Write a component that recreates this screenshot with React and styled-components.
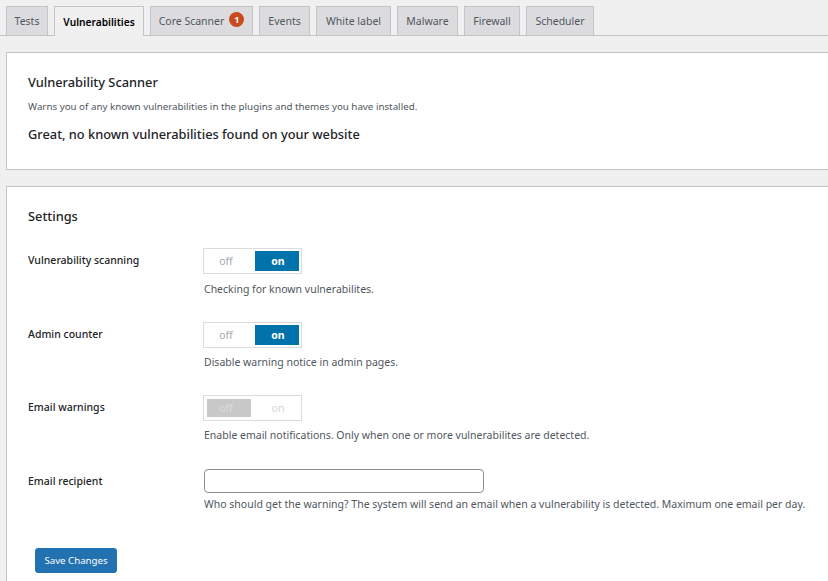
import styled, { createGlobalStyle } from 'styled-components'

const GlobalStyle = createGlobalStyle`
    html, body {
        margin: 0;
        padding: 0;
        background: #f0f0f1;
        overflow: hidden;
    }
    body {
        font-family: "Noto Sans", "Open Sans", sans-serif;
        color: #1d2327;
    }
`

const Page = styled.div`
    width: 828px;
    height: 581px;
    padding: 6px 0 0 6px;
    box-sizing: border-box;
    overflow: hidden;
`

const TabBar = styled.nav`
    display: flex;
    gap: 6px;
    height: 29px;
    margin-left: -6px;
    padding-left: 6px;
    border-bottom: 1px solid #c3c4c7;
`

const Tab = styled.a`
    display: flex;
    align-items: center;
    justify-content: center;
    gap: 5px;
    flex: none;
    width: ${ ( { $width } ) => $width }px;
    height: ${ ( { $active } ) => $active ? 30 : 29 }px;
    box-sizing: border-box;
    border: 1px solid #c3c4c7;
    border-bottom: 0;
    background: ${ ( { $active } ) => $active ? `#f0f0f1` : `#dcdcde` };
    color: ${ ( { $active } ) => $active ? `#000` : `#50575e` };
    font-size: ${ ( { $active } ) => $active ? 10.2 : 10.5 }px;
    font-weight: ${ ( { $active } ) => $active ? 600 : 400 };
    white-space: nowrap;
`

const Badge = styled.span`
    display: flex;
    align-items: center;
    justify-content: center;
    width: 15px;
    height: 15px;
    margin-top: -4px;
    border-radius: 50%;
    background: #ca4a1f;
    color: #fff;
    font-size: 9px;
    font-weight: 700;
`

const Panel = styled.section`
    width: 860px;
    box-sizing: border-box;
    margin-top: 16px;
    height: ${ ( { $height } ) => $height ? `${ $height }px` : `auto` };
    padding: 20px 21px ${ ( { $bottom } ) => $bottom }px;
    background: #fff;
    border: 1px solid #c3c4c7;
`

const PanelTitle = styled.h2`
    margin: 0;
    font-size: 12.8px;
    line-height: 18px;
    font-weight: 500;
    color: #1d2327;
`

const Intro = styled.p`
    margin: 9px 0 0;
    font-size: 9.78px;
    line-height: 14px;
    color: #50575e;
`

const Notice = styled.p`
    margin: 11px 0 0;
    font-size: 12.8px;
    line-height: 18px;
    font-weight: 500;
    color: #1d2327;
`

const Rows = styled.div`
    display: flex;
    flex-direction: column;
    margin-top: 23px;
`

const Row = styled.div`
    display: grid;
    grid-template-columns: 175px 1fr;
    height: ${ ( { $height } ) => $height }px;
`

const Label = styled.label`
    padding-top: 4px;
    font-size: 10.5px;
    line-height: 16px;
    font-weight: 500;
    color: #1d2327;
`

const Toggle = styled.div`
    display: flex;
    align-items: stretch;
    gap: 4px;
    width: 99px;
    height: 26px;
    box-sizing: border-box;
    padding: ${ ( { $disabled } ) => $disabled ? `3px 2px 3px 3px` : `2px 2px 2px 3px` };
    border: 1px solid #dcdcde;
    background: #fff;
`

const Segment = styled.span`
    display: flex;
    align-items: center;
    justify-content: center;
    width: 44px;
    box-sizing: border-box;
    padding: ${ ( { $side } ) => $side === `off` ? `0 6px 0 0` : `0 0 0 2px` };
    font-size: 10.5px;
    font-weight: ${ ( { $selected, $disabled } ) => $selected && !$disabled ? 700 : 400 };
    color: ${ ( { $selected, $disabled } ) => {
        if( $disabled ) return $selected ? `#dcdcde` : `#d5d5d5`
        return $selected ? `#fff` : `#a7aaad`
    } };
    background: ${ ( { $selected, $disabled } ) => {
        if( !$selected ) return `transparent`
        return $disabled ? `#c8c8c8` : `#0073aa`
    } };
`

const Hint = styled.p`
    margin: ${ ( { $top } ) => $top }px 0 0 1px;
    font-size: 10.5px;
    line-height: 15px;
    color: #50575e;
    white-space: nowrap;
`

const TextField = styled.input`
    display: block;
    width: 280px;
    height: 24px;
    margin-left: 1px;
    box-sizing: border-box;
    border: 1px solid #8c8f94;
    border-radius: 4px;
    background: #fff;
`

const SaveButton = styled.button`
    display: block;
    width: 82px;
    height: 25px;
    margin: 21px 0 0 7px;
    padding: 0;
    border: 1px solid #2271b1;
    border-radius: 3px;
    background: #2271b1;
    color: #fff;
    font-family: inherit;
    font-size: 9.7px;
`

const switch_rows = [
    { label: `Vulnerability scanning`, hint: `Checking for known vulnerabilites.`, on: true, height: 74, hint_top: 8 },
    { label: `Admin counter`, hint: `Disable warning notice in admin pages.`, on: true, height: 73, hint_top: 7 },
    { label: `Email warnings`, hint: `Enable email notifications. Only when one or more vulnerabilites are detected.`, on: false, disabled: true, height: 74, hint_top: 7 },
]

const tabs = [
    { name: `Tests`, width: 42 },
    { name: `Vulnerabilities`, width: 90 },
    { name: `Core Scanner`, width: 103 },
    { name: `Events`, width: 51 },
    { name: `White label`, width: 75 },
    { name: `Malware`, width: 61 },
    { name: `Firewall`, width: 56 },
    { name: `Scheduler`, width: 68 },
]

export default function App() {

    return <Page>

        <GlobalStyle />

        <TabBar>
            { tabs.map( tab => <Tab key={ tab.name } $width={ tab.width } $active={ tab.name === `Vulnerabilities` }>
                { tab.name }
                { tab.name === `Core Scanner` && <Badge>1</Badge> }
            </Tab> ) }
        </TabBar>

        <Panel $height={ 118 } $bottom={ 20 }>
            <PanelTitle>Vulnerability Scanner</PanelTitle>
            <Intro>Warns you of any known vulnerabilities in the plugins and themes you have installed.</Intro>
            <Notice>Great, no known vulnerabilities found on your website</Notice>
        </Panel>

        <Panel $bottom={ 40 }>

            <PanelTitle>Settings</PanelTitle>

            <Rows>

                { switch_rows.map( row => <Row key={ row.label } $height={ row.height }>
                    <Label>{ row.label }</Label>
                    <div>
                        <Toggle $disabled={ row.disabled }>
                            <Segment $side="off" $selected={ !row.on } $disabled={ row.disabled }>off</Segment>
                            <Segment $side="on" $selected={ row.on } $disabled={ row.disabled }>on</Segment>
                        </Toggle>
                        <Hint $top={ row.hint_top }>{ row.hint }</Hint>
                    </div>
                </Row> ) }

                <Row $height={ 58 }>
                    <Label>Email recipient</Label>
                    <div>
                        <TextField type="text" />
                        <Hint $top={ 4 }>Who should get the warning? The system will send an email when a vulnerability is detected. Maximum one email per day.</Hint>
                    </div>
                </Row>

            </Rows>

            <SaveButton>Save Changes</SaveButton>

        </Panel>

    </Page>

}
